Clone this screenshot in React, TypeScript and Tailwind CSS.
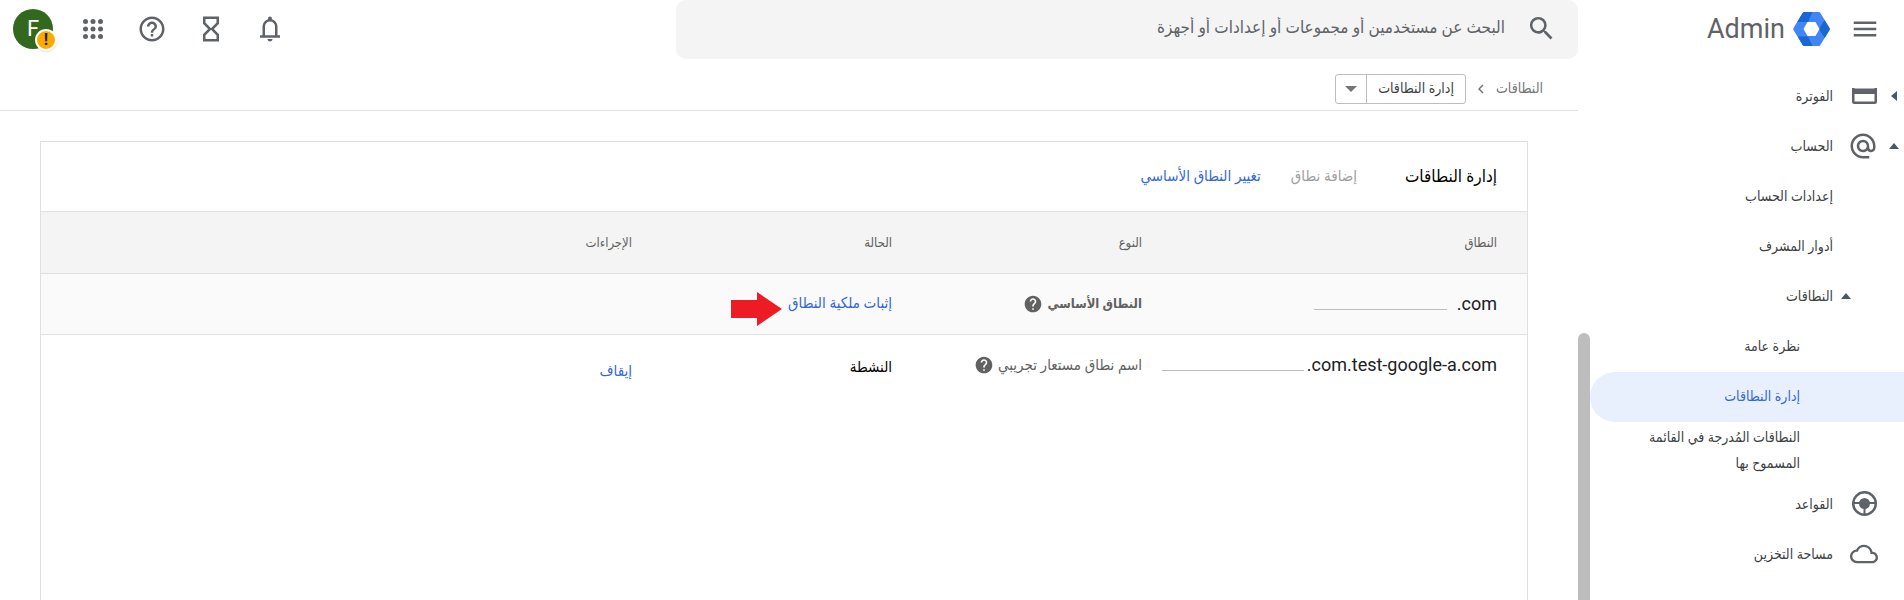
import { useState } from 'react';
import type { ReactNode } from 'react';
import { MdAlternateEmail, MdCloudQueue, MdHelp, MdHelpOutline, MdMenu, MdSearch } from 'react-icons/md';

type NavItem = {
  label: string;
  icon?: ReactNode;
  arrow?: 'left' | 'up';
  level: 0 | 1 | 2;
};

const navItems: NavItem[] = [
  { label: 'الفوترة', icon: <BillingIcon />, arrow: 'left', level: 0 },
  { label: 'الحساب', icon: <MdAlternateEmail size={30} />, arrow: 'up', level: 0 },
  { label: 'إعدادات الحساب', level: 1 },
  { label: 'أدوار المشرف', level: 1 },
  { label: 'النطاقات', arrow: 'up', level: 1 },
  { label: 'نظرة عامة', level: 2 },
  { label: 'إدارة النطاقات', level: 2 },
  { label: 'النطاقات المُدرجة في القائمة المسموح بها', level: 2 },
  { label: 'القواعد', icon: <WheelIcon />, level: 0 },
  { label: 'مساحة التخزين', icon: <MdCloudQueue size={28} />, level: 0 },
];

function BillingIcon() {
  return (
    <svg width="26" height="16" viewBox="0 0 26 16" fill="currentColor">
      <path fillRule="evenodd" d="M0 0h25v13.500a2.500 2.500 0 0 1-2.500 2.500h-20A2.500 2.500 0 0 1 0 13.500zM2.500 6v7.500h20V6z" />
      <path d="M2.500 0h20v1h-20z" fill="#b0b3b8" />
    </svg>
  );
}

function WheelIcon() {
  return (
    <svg width="26" height="26" viewBox="0 0 26 26" fill="none" stroke="currentColor" strokeWidth="2.5">
      <circle cx="12.500" cy="12.500" r="11.3" />
      <path d="M1.500 12h22M12.500 13v11" strokeWidth="2" />
      <circle cx="12.500" cy="12.500" r="5.500" fill="currentColor" stroke="none" />
    </svg>
  );
}

function BellIcon() {
  return (
    <svg width="30" height="30" viewBox="0 0 24 24" fill="currentColor">
      <path d="M4 19v-2h2v-7q0-2.075 1.250-3.687T10.500 4.200v-.7q0-.625.438-1.062T12 2t1.063.438T13.500 3.500v.7q2 .5 3.250 2.113T18 10v7h2v2H4Zm8 3q-.825 0-1.412-.587T10 20h4q0 .825-.587 1.413T12 22Zm-4-5h8v-7q0-1.650-1.175-2.825T12 6 9.175 7.175 8 10v7Z" />
    </svg>
  );
}

function HourglassIcon() {
  return (
    <svg width="30" height="30" viewBox="0 0 30 30" fill="none" stroke="currentColor" strokeWidth="2.500">
      <path d="M8.250 3.750h13.500v5.500L16 15l5.750 5.750v5.500H8.250v-5.500L14 15 8.250 9.250z" />
    </svg>
  );
}

function AppsIcon() {
  return (
    <svg width="30" height="30" viewBox="0 0 30 30" fill="currentColor">
      {[7.5, 15, 22.5].map((y) =>
        [7.5, 15, 22.5].map((x) => <circle key={x + '-' + y} cx={x} cy={y} r="2.500" />)
      )}
    </svg>
  );
}

function AdminLogo() {
  return (
    <svg width="37" height="34" viewBox="0 0 37 34">
      <path fill="#4285f4" d="M9.800.7Q10.200 0 11 0h15q.8 0 1.200.7L36.500 16q.6 1 0 2l-9.300 15.300q-.4.7-1.200.7H11q-.8 0-1.200-.7L.5 18q-.6-1 0-2z" />
      <path fill="#1967d2" d="M9.800.7Q10.200 0 11 0h8.500l-4.500 10H4.200z" />
      <path fill="#1967d2" d="M31.500 8l5 8q.6 1 0 2l-4.800 8L26 17z" />
      <path fill="#1967d2" d="M4.800 24.500H15l4.500 9.500H11q-.8 0-1.200-.7z" />
      <path fill="#fff" d="M14.500 10h8l4 7-4 7h-8l-4-7z" />
    </svg>
  );
}

function Triangle({ dir }: { dir: 'left' | 'up' | 'down' }) {
  if (dir === 'left') {
    return (
      <svg width="6" height="10" viewBox="0 0 6 10">
        <path d="M6 0v10L0 5z" fill="#455a64" />
      </svg>
    );
  }
  if (dir === 'up') {
    return (
      <svg width="10" height="6" viewBox="0 0 10 6">
        <path d="M0 6h10L5 0z" fill="#455a64" />
      </svg>
    );
  }
  return (
    <svg width="12" height="6" viewBox="0 0 12 6">
      <path d="M0 0h12L6 6z" fill="#757575" />
    </svg>
  );
}

function Sidebar({ active, onSelect }: { active: string; onSelect: (label: string) => void }) {
  return (
    <aside className="flex w-[326px] shrink-0 flex-col">
      <div className="flex h-[72px] items-start gap-5 pr-6 pt-3">
        <button type="button" aria-label="القائمة" className="mt-0.5 text-[#5f6368]">
          <MdMenu size={30} />
        </button>
        <a href="#" dir="ltr" className="flex items-center gap-2 text-[27px] leading-[34px] text-[#5f6368]">
          Admin
          <AdminLogo />
        </a>
      </div>
      <div className="flex grow">
        <nav className="grow">
          {navItems.map((item) => (
            <a
              key={item.label}
              href="#"
              onClick={() => onSelect(item.label)}
              className={
                'flex min-h-[50px] items-center rounded-l-full pb-1 pt-0.5 text-sm leading-[26px] ' +
                (item.label === active ? 'bg-[#e8f0fe] text-[#3367d6]' : 'text-[#3c4043]')
              }
            >
              {item.level === 0 && (
                <>
                  <span className="flex w-[26px] justify-center pl-1.5">
                    {item.arrow && <Triangle dir={item.arrow} />}
                  </span>
                  <span className="flex w-[45px] justify-start text-[#5f6368]">{item.icon}</span>
                </>
              )}
              {item.level === 1 && (
                <span className="flex w-[71px] justify-end pl-2">{item.arrow && <Triangle dir={item.arrow} />}</span>
              )}
              {item.level === 2 && <span className="w-[104px] shrink-0" />}
              <span className={item.level === 2 ? 'max-w-[180px]' : ''}>{item.label}</span>
            </a>
          ))}
        </nav>
        <div className="w-3 pt-[261px]">
          <div className="h-full rounded-t-full bg-[#bdbdbd]" />
        </div>
      </div>
    </aside>
  );
}

function TopBar() {
  return (
    <header className="flex h-[59px] items-center justify-between pl-[13px]">
      <label className="flex h-full w-[902px] items-center gap-[21px] rounded-[10px] bg-[#f4f4f4] pb-0.5 pr-[21px]">
        <MdSearch size={31} className="text-[#5f6368]" />
        <input
          type="text"
          aria-label="بحث"
          placeholder="البحث عن مستخدمين أو مجموعات أو إعدادات أو أجهزة"
          className="grow bg-transparent pb-0.5 text-[17px] outline-none placeholder:text-[#5f6368]"
        />
      </label>
      <div className="flex items-center gap-[25px] pb-0.5">
        <div className="flex items-center gap-[29px] text-[#5f6368]">
          <button type="button" aria-label="الإشعارات">
            <BellIcon />
          </button>
          <button type="button" aria-label="المهام">
            <HourglassIcon />
          </button>
          <button type="button" aria-label="مساعدة">
            <MdHelpOutline size={30} />
          </button>
          <button type="button" aria-label="التطبيقات">
            <AppsIcon />
          </button>
        </div>
        <button type="button" aria-label="الحساب" className="relative size-10 rounded-full bg-[#33691e] text-[22px] text-white">
          F
          <span className="absolute -bottom-0.5 -right-1 flex size-[22px] items-center justify-center rounded-full border-2 border-white bg-[#f9ab00] text-base font-bold text-[#202124] shadow-sm">
            !
          </span>
        </button>
      </div>
    </header>
  );
}

function Breadcrumb() {
  return (
    <div className="flex h-[52px] items-center border-b border-[#e0e0e0] pr-[35px] pt-2 text-sm">
      <a href="#" className="pb-0.5 text-[#757575]">
        النطاقات
      </a>
      <svg width="6" height="10" viewBox="0 0 6 10" className="mx-3" fill="none" stroke="#757575" strokeWidth="1.5">
        <path d="M5 1L1 5l4 4" />
      </svg>
      <div className="flex h-[30px] items-stretch rounded-[3px] border border-[#bdbdbd]">
        <button type="button" className="border-l border-[#bdbdbd] px-[11px] pb-0.5 text-[#3c4043]">
          إدارة النطاقات
        </button>
        <button type="button" aria-label="المزيد" className="flex w-[30px] items-center justify-center">
          <Triangle dir="down" />
        </button>
      </div>
    </div>
  );
}

function DomainsTable() {
  return (
    <table className="w-full table-fixed text-right">
      <thead>
        <tr className="h-[61px] border-b border-[#e0e0e0] bg-[#f4f4f4] text-[13px] text-[#616161]">
          <th className="w-[355px] pr-[30px] font-normal">النطاق</th>
          <th className="w-[250px] pr-[30px] font-normal">النوع</th>
          <th className="w-[260px] pr-[30px] font-normal">الحالة</th>
          <th className="pr-[30px] font-normal">الإجراءات</th>
        </tr>
      </thead>
      <tbody className="text-[15px]">
        <tr className="h-[61px] border-b border-[#e0e0e0] bg-[#fafafa]">
          <td className="pr-[30px] text-lg text-[#202124]">
            <div dir="ltr" className="flex items-end justify-end gap-[10px]">
              <span className="mb-2 w-[133px] border-b border-[#bdbdbd]" />
              .com
            </div>
          </td>
          <td className="pr-[30px] text-[13px] font-bold text-[#616161]">
            <div className="flex items-center gap-1">
              النطاق الأساسي
              <MdHelp size={20} />
            </div>
          </td>
          <td className="pr-[30px]">
            <a href="#" className="relative text-[#3367d6]">
              إثبات ملكية النطاق
              <svg width="51" height="34" viewBox="0 0 51 34" className="absolute -top-0.5 right-full mr-1.5" fill="#ed1c24">
                <path d="M0 8h26V0l25 17-25 17v-8H0z" />
              </svg>
            </a>
          </td>
          <td />
        </tr>
        <tr className="h-[61px]">
          <td className="whitespace-nowrap text-lg text-[#202124]">
            <div dir="ltr" className="flex items-end justify-end gap-[3px] pr-[30px]">
              <span className="mb-2 w-[142px] shrink-0 border-b border-[#bdbdbd]" />
              .com.test-google-a.com
            </div>
          </td>
          <td className="pr-[30px] text-[#616161]">
            <div className="flex items-center gap-1 whitespace-nowrap">
              اسم نطاق مستعار تجريبي
              <MdHelp size={20} />
            </div>
          </td>
          <td className="pr-[30px] pt-1 text-black">النشطة</td>
          <td className="pr-[30px] pt-3">
            <a href="#" className="text-[#3367d6]">
              إيقاف
            </a>
          </td>
        </tr>
      </tbody>
    </table>
  );
}

export default function App() {
  const [active, setActive] = useState('إدارة النطاقات');

  return (
    <div
      dir="rtl"
      className="flex min-h-screen bg-white font-['Roboto','DejaVu_Sans_Condensed','DejaVu_Sans',sans-serif]"
    >
      <Sidebar active={active} onSelect={setActive} />
      <main className="flex grow flex-col">
        <TopBar />
        <Breadcrumb />
        <section className="ml-10 mr-[50px] mt-[30px] grow border-x border-t border-[#e0e0e0]">
          <div className="flex h-[70px] items-center border-b border-[#e0e0e0] pr-[30px] text-[15px]">
            <h1 className="ml-12 text-[17px] text-black">إدارة النطاقات</h1>
            <button type="button" disabled className="ml-[30px] text-[#9e9e9e]">
              إضافة نطاق
            </button>
            <a href="#" className="text-[#3367d6]">
              تغيير النطاق الأساسي
            </a>
          </div>
          <DomainsTable />
        </section>
      </main>
    </div>
  );
}
